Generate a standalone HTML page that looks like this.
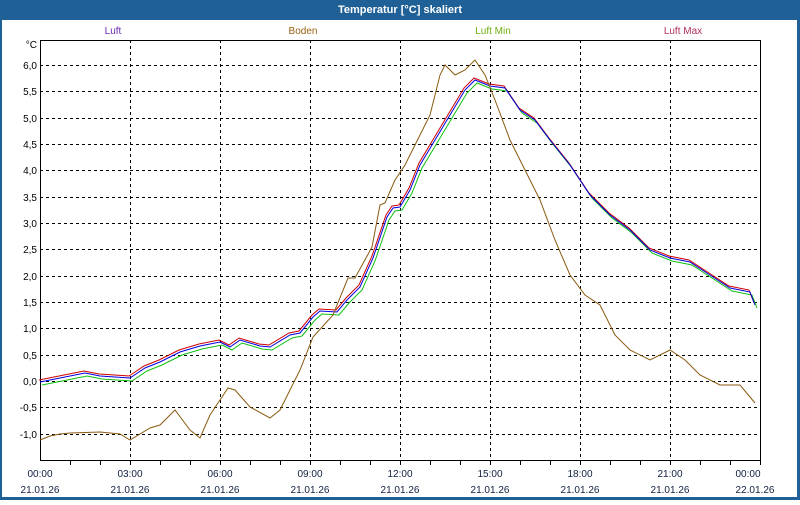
<!DOCTYPE html>
<html><head><meta charset="utf-8"><style>
body{margin:0;width:800px;height:500px;overflow:hidden;background:#fff;font-family:"Liberation Sans",sans-serif}
</style></head><body>
<svg width="800" height="500" xmlns="http://www.w3.org/2000/svg" font-family="Liberation Sans, sans-serif" font-size="10">
<rect x="0" y="0" width="800" height="500" fill="#1f6096"/>
<rect x="2" y="20" width="795" height="477" fill="#fff"/>
<text x="400" y="13" fill="#fff" font-weight="bold" font-size="11" text-anchor="middle">Temperatur [°C] skaliert</text>
<text x="113" y="34" fill="#6a2bb0" text-anchor="middle">Luft</text>
<text x="303" y="34" fill="#9a6010" text-anchor="middle">Boden</text>
<text x="493" y="34" fill="#70b010" text-anchor="middle">Luft Min</text>
<text x="683" y="34" fill="#b03060" text-anchor="middle">Luft Max</text>
<g stroke="#000" stroke-dasharray="3,3" stroke-width="1">
<path d="M40 65.5H760M40 91.5H760M40 118.5H760M40 144.5H760M40 170.5H760M40 197.5H760M40 223.5H760M40 249.5H760M40 276.5H760M40 302.5H760M40 328.5H760M40 355.5H760M40 381.5H760M40 407.5H760M40 434.5H760"/>
<path d="M130.5 40V460M220.5 40V460M310.5 40V460M400.5 40V460M490.5 40V460M580.5 40V460M670.5 40V460"/>
</g>
<rect x="40.5" y="40.5" width="720" height="420" fill="none" stroke="#000"/>
<path stroke="#000" d="M70.5 460v5M100.5 460v5M130.5 460v5M160.5 460v5M190.5 460v5M220.5 460v5M250.5 460v5M280.5 460v5M310.5 460v5M340.5 460v5M370.5 460v5M400.5 460v5M430.5 460v5M460.5 460v5M490.5 460v5M520.5 460v5M550.5 460v5M580.5 460v5M610.5 460v5M640.5 460v5M670.5 460v5M700.5 460v5M730.5 460v5M760.5 460v5"/>
<g text-anchor="end" fill="#000">
<text x="37" y="48">°C</text>
<text x="37" y="69">6,0</text><text x="37" y="95">5,5</text><text x="37" y="122">5,0</text><text x="37" y="148">4,5</text><text x="37" y="174">4,0</text><text x="37" y="201">3,5</text><text x="37" y="227">3,0</text><text x="37" y="253">2,5</text><text x="37" y="280">2,0</text><text x="37" y="306">1,5</text><text x="37" y="332">1,0</text><text x="37" y="359">0,5</text><text x="37" y="385">0,0</text><text x="37" y="411">-0,5</text><text x="37" y="438">-1,0</text>
</g>
<g text-anchor="middle" fill="#102040">
<text x="40" y="477">00:00</text><text x="130" y="477">03:00</text><text x="220" y="477">06:00</text><text x="310" y="477">09:00</text><text x="400" y="477">12:00</text><text x="490" y="477">15:00</text><text x="580" y="477">18:00</text><text x="670" y="477">21:00</text><text x="748" y="477">00:00</text>
<text x="40" y="493">21.01.26</text><text x="130" y="493">21.01.26</text><text x="220" y="493">21.01.26</text><text x="310" y="493">21.01.26</text><text x="400" y="493">21.01.26</text><text x="490" y="493">21.01.26</text><text x="580" y="493">21.01.26</text><text x="670" y="493">21.01.26</text><text x="755" y="493">22.01.26</text>
</g>
<defs>
<polyline id="L" fill="none" points="40,382 60,378 85,373 100,376 130,378 145,368 160,362 180,352 200,346 220,342 230,347 240,340 260,346 270,347 290,335 300,333 313,317 320,311 337,312 347,300 360,287 373,258 387,217 393,208 400,207 410,190 420,165 435,140 450,115 465,90 475,80 490,86 505,88 520,110 535,120 550,140 570,165 590,195 610,215 630,230 650,250 670,258 690,262 710,275 730,288 750,292 755,305"/>
</defs>
<use href="#L" stroke="#10c010" transform="translate(2,3)"/>
<use href="#L" stroke="#d00000" transform="translate(-1,-2)"/>
<use href="#L" stroke="#0000e0"/>
<polyline fill="none" stroke="#8a5a10" points="40,440 50,436 60,434 70,433 100,432 120,434 130,440 150,428 160,425 175,410 190,430 200,438 210,415 220,400 228,388 235,390 250,407 270,418 280,410 300,370 313,337 333,315 348,278 355,278 372,247 380,205 385,203 395,180 405,165 420,135 430,115 440,75 445,65 455,75 465,70 475,60 485,75 495,100 510,140 525,170 540,200 555,240 570,275 585,295 600,305 615,335 630,350 650,360 670,350 685,360 700,375 720,385 740,385 755,403"/>
</svg>
</body></html>
